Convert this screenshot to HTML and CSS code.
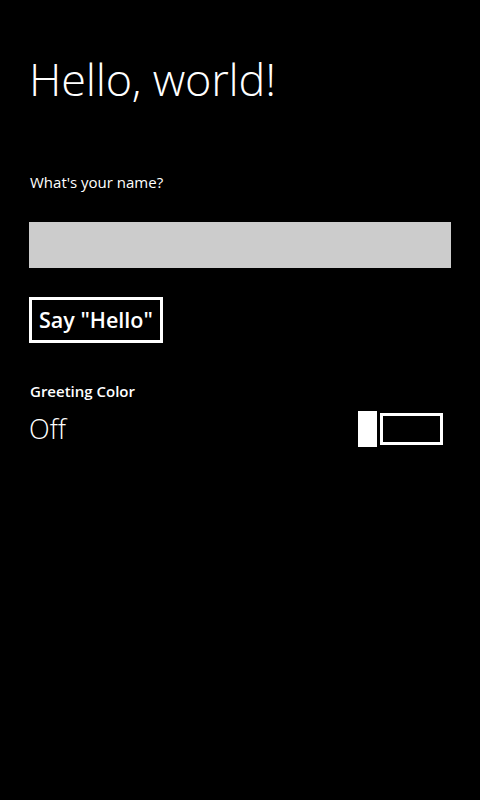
FILE: index.html
```html
<!DOCTYPE html>
<html>
<head>
<meta charset="utf-8">
<link rel="stylesheet" href="styles.css">
</head>
<body>
<main class="page">
  <h1 class="title">Hello, world!</h1>
  <label class="label">What's your name?</label>
  <div class="input"></div>
  <button class="btn">Say "Hello"</button>
  <div class="group-label">Greeting Color</div>
  <div class="toggle-row">
    <span class="toggle-state">Off</span>
    <div class="toggle">
      <div class="thumb"></div>
      <div class="track"></div>
    </div>
  </div>
</main>
</body>
</html>
```
FILE: styles.css
```css
html, body {
  margin: 0;
  padding: 0;
  background: #000;
  width: 480px;
  height: 800px;
  overflow: hidden;
}
body {
  font-family: "Open Sans", sans-serif;
  color: #fff;
}
.page {
  display: flex;
  flex-direction: column;
  align-items: flex-start;
  padding: 0 29px;
}
.title {
  margin: 49px 0 0 0;
  font-weight: 300;
  font-size: 45px;
  line-height: 60px;
  letter-spacing: -0.2px;
}
.label {
  margin: 63px 0 0 1px;
  font-size: 15px;
  line-height: 20px;
}
.input {
  margin-top: 30px;
  width: 422px;
  height: 46px;
  background: #cccccc;
}
.btn {
  margin-top: 29px;
  box-sizing: border-box;
  width: 134px;
  height: 46px;
  border: 3px solid #fff;
  background: #000;
  color: #fff;
  font-family: "Open Sans", sans-serif;
  font-weight: 600;
  font-size: 21.5px;
  padding: 0 0 1px 7px;
  display: flex;
  align-items: center;
  justify-content: flex-start;
  white-space: nowrap;
}
.group-label {
  margin: 38px 0 0 1px;
  font-weight: 600;
  font-size: 15px;
  line-height: 20px;
}
.toggle-row {
  align-self: stretch;
  display: flex;
  align-items: center;
  justify-content: space-between;
  margin-top: 10px;
  padding-right: 8px;
}
.toggle-state {
  margin-left: 0;
  font-weight: 300;
  font-size: 27px;
  line-height: 36px;
}
.toggle {
  display: flex;
  align-items: center;
  gap: 3px;
}
.thumb {
  width: 19px;
  height: 36px;
  background: #fff;
}
.track {
  box-sizing: border-box;
  width: 63px;
  height: 32px;
  border: 3px solid #fff;
}
```
